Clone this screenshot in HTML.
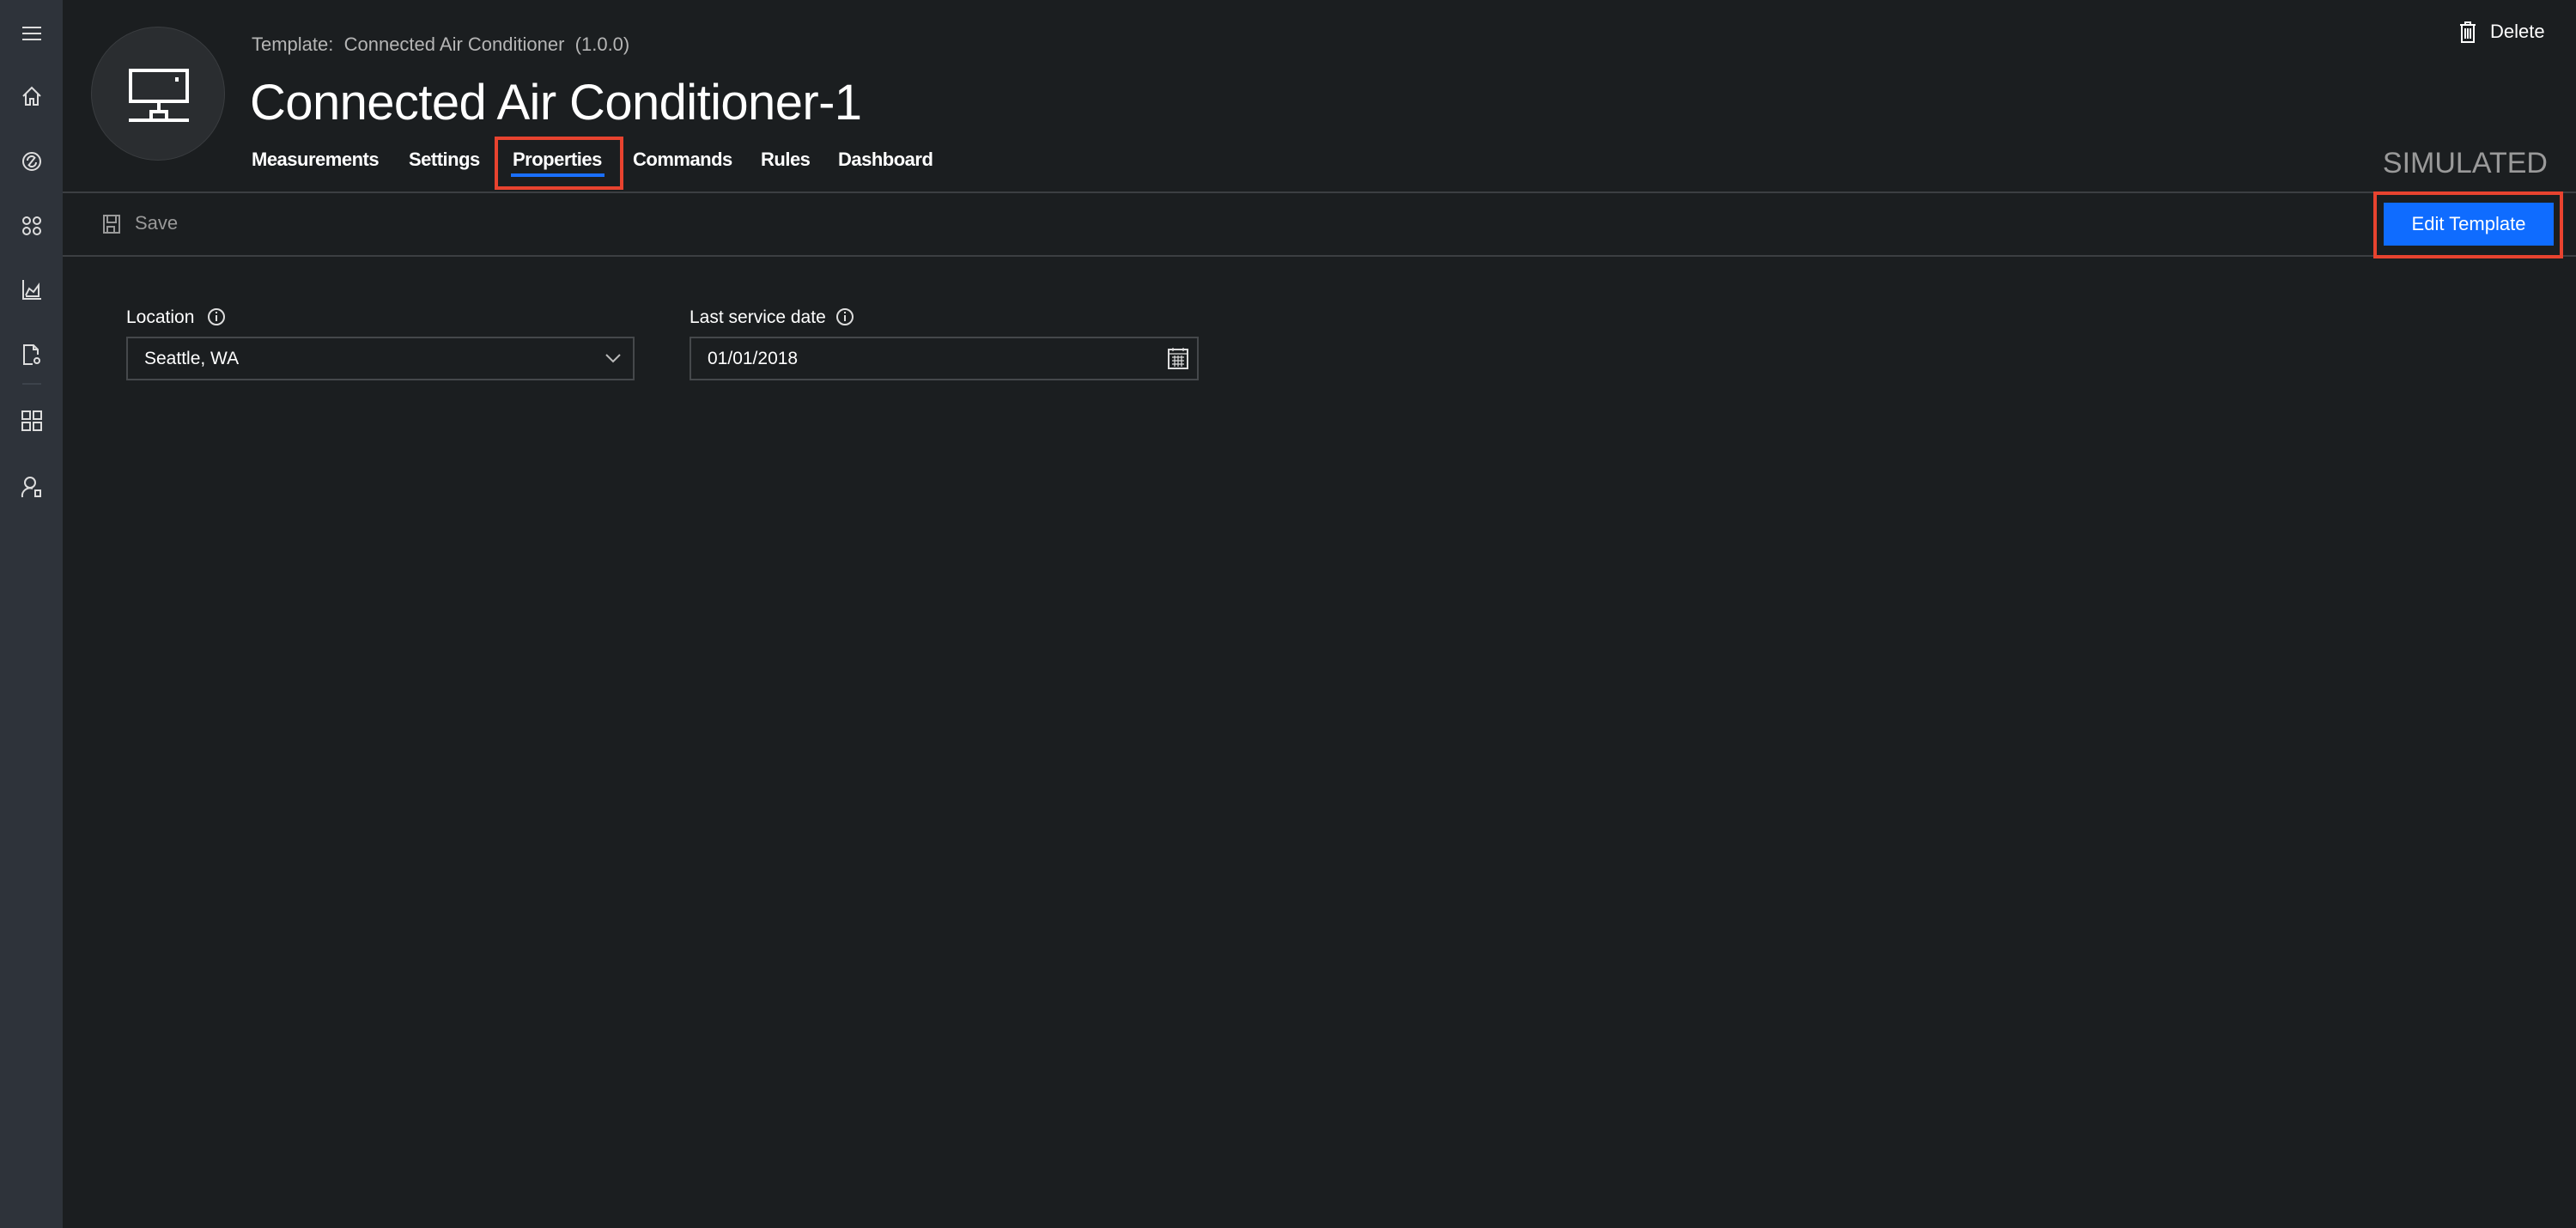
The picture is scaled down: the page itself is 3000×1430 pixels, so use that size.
<!DOCTYPE html>
<html><head><meta charset="utf-8"><style>
*{margin:0;padding:0;box-sizing:border-box}
body{width:3000px;height:1430px;background:#1b1e20;font-family:"Liberation Sans",sans-serif;color:#fff;position:relative;overflow:hidden}
.abs{position:absolute}
.side{left:0;top:0;width:73px;height:1430px;background:#2e333a}
.ico{position:absolute;left:24px;width:26px;height:26px}
.t{position:absolute;white-space:nowrap;line-height:1}
.tab{position:absolute;top:173px;font-size:22px;font-weight:bold;letter-spacing:-0.5px}
</style></head><body>
<div class="abs side">
<svg class="ico" style="top:26px" viewBox="0 0 26 26" stroke="#ddd" stroke-width="2"><path d="M2 6H24M2 13H24M2 20H24"/></svg>
<svg class="ico" style="top:99px" viewBox="0 0 26 26" fill="none" stroke="#ddd" stroke-width="2"><path d="M3 13L13 3L23 13M6 10V23H11V16H15V23H20V10"/></svg>
<svg class="ico" style="top:175px" viewBox="0 0 26 26" fill="none" stroke="#ddd" stroke-width="2"><circle cx="13" cy="13" r="10"/><path d="M9 18L17 8M8 12A5 5 0 0 1 16 8M18 14A5 5 0 0 1 10 18"/></svg>
<svg class="ico" style="top:250px" viewBox="0 0 26 26" fill="none" stroke="#ddd" stroke-width="2"><circle cx="7" cy="7" r="4"/><circle cx="19" cy="7" r="4"/><circle cx="7" cy="19" r="4"/><circle cx="19" cy="19" r="4"/></svg>
<svg class="ico" style="top:324px" viewBox="0 0 26 26" fill="none" stroke="#ddd" stroke-width="2"><path d="M3 2V24H24M6 20L10 12L15 16L21 8V21H6"/></svg>
<svg class="ico" style="top:400px" viewBox="0 0 26 26" fill="none" stroke="#ddd" stroke-width="2"><path d="M14 24H4V2H15L20 7V13M15 2V7H20"/><circle cx="19" cy="20" r="3"/></svg>
<div class="abs" style="left:26px;top:446px;width:22px;height:2px;background:#3d434b"></div>
<svg class="ico" style="top:477px" viewBox="0 0 26 26" fill="none" stroke="#ddd" stroke-width="2"><rect x="2" y="2" width="9" height="9"/><rect x="15" y="2" width="9" height="9"/><rect x="2" y="15" width="9" height="9"/><rect x="15" y="15" width="9" height="9"/></svg>
<svg class="ico" style="top:554px" viewBox="0 0 26 26" fill="none" stroke="#ddd" stroke-width="2"><circle cx="11" cy="8" r="6"/><path d="M2 25A9 9 0 0 1 14 15"/><rect x="17" y="17" width="6" height="7"/></svg>
</div>
<div class="abs" style="left:106px;top:31px;width:156px;height:156px;border-radius:50%;background:#2a2d30;border:1px solid #3a3d40"></div>
<svg class="abs" style="left:148px;top:80px" width="74" height="66" viewBox="0 0 74 66" fill="none" stroke="#fff" stroke-width="4"><rect x="4" y="2" width="66" height="36"/><path d="M58 10V15M37 38V50M28 60V50H46V60M2 60H72"/></svg>
<div class="t" style="left:293px;top:41px;font-size:22px;color:#b5b5b5">Template:&nbsp; Connected Air Conditioner &nbsp;(1.0.0)</div>
<div class="t" style="left:291px;top:91px;font-size:58px;letter-spacing:-0.6px">Connected Air Conditioner-1</div>
<div class="tab" style="left:293px">Measurements</div>
<div class="tab" style="left:476px">Settings</div>
<div class="tab" style="left:597px">Properties</div>
<div class="tab" style="left:737px">Commands</div>
<div class="tab" style="left:886px">Rules</div>
<div class="tab" style="left:976px">Dashboard</div>
<div class="abs" style="left:595px;top:202px;width:109px;height:4px;background:#1a6fff"></div>
<div class="abs" style="left:576px;top:159px;width:150px;height:62px;border:4px solid #e8432f"></div>
<div class="abs" style="left:73px;top:223px;width:2927px;height:2px;background:#3c3f42"></div>
<div class="abs" style="left:73px;top:297px;width:2927px;height:2px;background:#3c3f42"></div>
<svg class="abs" style="left:120px;top:250px" width="20" height="22" viewBox="0 0 20 22" fill="none" stroke="#999" stroke-width="2"><rect x="1" y="1" width="18" height="20"/><path d="M5 1V9H15V1M5 21V14H13V21"/></svg>
<div class="t" style="left:157px;top:249px;font-size:22px;color:#999">Save</div>
<svg class="abs" style="left:2864px;top:24px" width="20" height="26" viewBox="0 0 20 26" fill="none" stroke="#fff" stroke-width="2"><path d="M1 5H19M7 5V2H13V5M3 5V25H17V5M7 9V21M10 9V21M13 9V21"/></svg>
<div class="t" style="left:2900px;top:26px;font-size:22px">Delete</div>
<div class="t" style="right:33px;top:173px;font-size:34px;color:#9a9a9a">SIMULATED</div>
<div class="abs" style="left:2764px;top:223px;width:221px;height:78px;border:4px solid #e8432f"></div>
<div class="abs" style="left:2776px;top:236px;width:198px;height:50px;background:#0f6cff;font-size:22px;line-height:50px;text-align:center">Edit Template</div>
<div class="t" style="left:147px;top:359px;font-size:21px">Location</div>
<svg class="abs" style="left:241px;top:358px" width="22" height="22" viewBox="0 0 22 22" fill="none" stroke="#ddd" stroke-width="2"><circle cx="11" cy="11" r="9"/><path d="M11 9V16M11 5V7"/></svg>
<div class="abs" style="left:147px;top:392px;width:592px;height:51px;border:2px solid #45484b"></div>
<div class="t" style="left:168px;top:407px;font-size:21px">Seattle, WA</div>
<svg class="abs" style="left:704px;top:410px" width="20" height="14" viewBox="0 0 20 14" fill="none" stroke="#bbb" stroke-width="2"><path d="M2 3L10 11L18 3"/></svg>
<div class="t" style="left:803px;top:359px;font-size:21px">Last service date</div>
<svg class="abs" style="left:973px;top:358px" width="22" height="22" viewBox="0 0 22 22" fill="none" stroke="#ddd" stroke-width="2"><circle cx="11" cy="11" r="9"/><path d="M11 9V16M11 5V7"/></svg>
<div class="abs" style="left:803px;top:392px;width:593px;height:51px;border:2px solid #45484b"></div>
<div class="t" style="left:824px;top:407px;font-size:21px">01/01/2018</div>
<svg class="abs" style="left:1360px;top:404px" width="24" height="26" viewBox="0 0 24 26" fill="none" stroke="#ddd" stroke-width="2"><rect x="1" y="3" width="22" height="22"/><path d="M1 8H23M6 1V5M18 1V5M5 12H19M5 16H19M5 20H19M8 10V23M12 10V23M16 10V23" stroke-width="1.2"/></svg>
</body></html>
